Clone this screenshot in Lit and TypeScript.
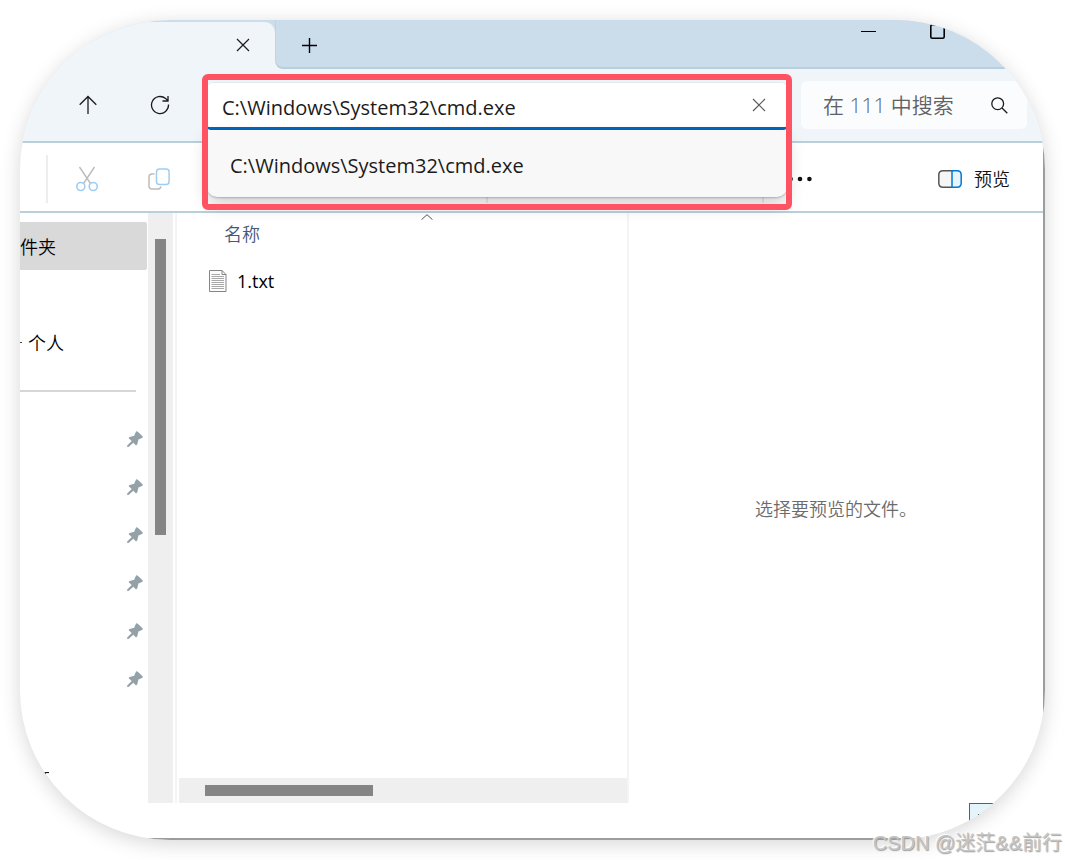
import { LitElement, html, css, svg } from "lit";
import { customElement, state } from "lit/decorators.js";

const PATH = "C:\\Windows\\System32\\cmd.exe";

const cross = svg`<path d="M1 1 L13 13 M13 1 L1 13" />`;

@customElement("app-root")
export class AppRoot extends LitElement {
  static styles = css`
    :host {
      display: block;
      position: relative;
      background: #fff;
      color: #1b1b1b;
      font-family: "Open Sans", "Noto Sans CJK SC", sans-serif;
      font-size: 18px;
      line-height: 24px;
    }
    * {
      box-sizing: border-box;
    }
    button {
      display: flex;
      align-items: center;
      justify-content: center;
      padding: 0;
      border: 0;
      background: none;
      color: inherit;
      font: inherit;
    }
    input {
      min-width: 0;
      flex: 1;
      padding: 0;
      border: 0;
      outline: 0;
      background: none;
      color: inherit;
      font: inherit;
    }
    svg {
      display: block;
      flex: none;
      fill: none;
      stroke: currentColor;
    }
    .page {
      display: flex;
      min-height: 100vh;
      padding: 20px;
    }
    .window {
      display: flex;
      flex: 1;
      flex-direction: column;
      min-width: 0;
      overflow: hidden;
      border-radius: 150px;
      background: #fff;
      box-shadow: 0 4px 20px rgba(0, 0, 0, 0.16);
    }

    .titlebar {
      display: flex;
      height: 49px;
      background: linear-gradient(#cbddeb 50%, #eff5f9 50%);
    }
    .tab {
      display: flex;
      justify-content: flex-end;
      width: 255px;
      margin-top: 2px;
      padding-right: 16px;
      border-radius: 0 10px 0 0;
      background: #eff5f9;
    }
    .tab button {
      width: 32px;
      height: 45px;
    }
    .strip {
      display: flex;
      flex: 1;
      justify-content: space-between;
      border-bottom: 2px solid #b9cfdf;
      border-left: 1px solid #bfd3e2;
      border-radius: 0 0 0 8px;
      background: #cbddeb;
      color: #000;
    }
    .strip > button {
      width: 67px;
      height: 50px;
    }
    .controls {
      display: flex;
      height: 22px;
      padding-right: 4px;
      color: #000;
    }
    .controls button {
      width: 69px;
    }

    .navbar {
      display: flex;
      align-items: center;
      height: 74px;
      padding: 0 18px 0 32px;
      border-bottom: 2px solid #b9cfda;
      background: #eff5f9;
      font-size: 20px;
    }
    .navbar > button {
      width: 72px;
      height: 48px;
    }
    .address {
      position: relative;
      display: flex;
      flex: 1;
      align-items: center;
      height: 48px;
      margin: 2px 0 0 11px;
      padding: 0 12px 0 15px;
      border-top: 1px solid #e6e9ec;
      border-bottom: 3px solid #0067c0;
      border-radius: 6px 6px 4px 4px;
      background: #fff;
    }
    .address input {
      padding-top: 5px;
    }
    .address .clear {
      width: 32px;
      height: 32px;
      color: #5c5c5c;
    }
    .suggestions {
      position: absolute;
      z-index: 1;
      top: 47px;
      left: 0;
      right: 0;
      margin: 0;
      padding: 12px 8px 9px;
      border-radius: 0 0 10px 10px;
      background: #f8f8f8;
      box-shadow: 0 1px 2px rgba(0, 0, 0, 0.22), 0 8px 18px rgba(0, 0, 0, 0.18);
    }
    .suggestions button {
      justify-content: flex-start;
      width: 100%;
      height: 46px;
      padding: 2px 0 0 15px;
    }
    .marker {
      position: absolute;
      z-index: 2;
      inset: -9px -5px -83px -5px;
      border: 6px solid #ff5263;
      border-radius: 6px;
      pointer-events: none;
    }
    .search {
      display: flex;
      align-items: center;
      width: 226px;
      height: 48px;
      margin-left: 14px;
      padding: 0 19px 0 22px;
      border-radius: 6px;
      background: #fbfcfe;
      font-size: 21px;
      font-weight: 350;
    }
    .search input::placeholder {
      color: #5f6163;
      opacity: 1;
    }

    .lower {
      display: flex;
      flex: 1;
      flex-direction: column;
      border: solid #9c9c9c;
      border-width: 0 2px 2px 0;
    }
    .commands {
      display: flex;
      align-items: center;
      height: 70px;
      padding: 4px 33px 0 26px;
      border-bottom: 2px solid #b9cfda;
    }
    .commands button {
      width: 72px;
      height: 48px;
    }
    .rule {
      width: 2px;
      height: 48px;
      background: #ededed;
    }
    .edit,
    .arrange {
      display: flex;
    }
    .edit {
      width: 438px;
      padding-left: 3px;
    }
    .arrange {
      width: 274px;
    }
    .commands .preview-toggle {
      width: auto;
      gap: 12px;
      margin-left: auto;
      color: #111;
      font-weight: 350;
    }

    .content {
      display: flex;
      flex: 1;
    }
    .tree {
      width: 128px;
      margin: 0;
      padding: 9px 1px 0 0;
      list-style: none;
      color: #000;
      font-weight: 350;
    }
    .tree li {
      display: flex;
      align-items: center;
      height: 48px;
      padding-top: 1px;
      white-space: pre;
    }
    .tree .current {
      border-radius: 0 2px 2px 0;
      background: #d9d9d9;
    }
    .tree .pinned {
      justify-content: flex-end;
      padding-right: 4px;
      color: #95a1a9;
    }
    .tree hr {
      width: 100%;
      height: 2px;
      margin: 0 11px 0 0;
      border: 0;
      background: #d6d6d6;
    }
    .tree .dash {
      width: 2px;
      height: 1px;
      margin-right: 6px;
      background: #444;
    }
    .vscroll {
      width: 25px;
      padding: 26px 7px 0;
      background: #efefef;
    }
    .vscroll .thumb {
      height: 296px;
    }
    .thumb {
      background: #858585;
    }
    .files {
      display: flex;
      flex: 0 1 454px;
      flex-direction: column;
      justify-content: space-between;
      min-width: 0;
      margin-left: 2px;
      padding-left: 2px;
      overflow: hidden;
      border: solid #f4f4f4;
      border-width: 0 2px;
    }
    table {
      width: 436px;
      margin-left: 30px;
      border-collapse: collapse;
      color: #000;
    }
    th,
    td {
      padding: 0;
      font-weight: 350;
      text-align: left;
    }
    td {
      font-weight: 400;
    }
    th button {
      flex-direction: column;
      align-items: stretch;
      width: 100%;
      height: 44px;
      justify-content: flex-start;
      padding: 1px 0 0;
      color: #44597a;
      text-align: left;
    }
    th svg {
      align-self: center;
      color: #555;
    }
    th span {
      padding: 2px 15px 0;
    }
    .file {
      display: flex;
      align-items: center;
      gap: 10px;
      height: 48px;
    }
    .hscroll {
      padding: 7px 26px;
      background: #efefef;
    }
    .hscroll .thumb {
      width: 168px;
      height: 11px;
    }
    .preview {
      display: flex;
      flex: 1;
      align-items: center;
      justify-content: center;
      padding-top: 2px;
      color: #6b6b6b;
      font-weight: 350;
    }
    .status {
      display: flex;
      justify-content: flex-end;
      height: 35px;
      padding-right: 38px;
    }
    .status button {
      align-items: flex-start;
      justify-content: flex-start;
      width: 36px;
      padding: 10px 8px;
      border: 1px solid #0078d7;
      background: #e5f3fb;
    }
    .credit {
      position: absolute;
      right: 3px;
      bottom: 5px;
      color: #c4c4c4;
      font-family: "Liberation Sans", "Noto Sans CJK SC", sans-serif;
      font-size: 20px;
      font-weight: 350;
      text-shadow: 1px 1px 1px #a0a0a0, -1px -1px 1px #fff;
    }
  `;

  @state() private address = PATH;

  private pin() {
    return html`<li class="pinned">
      <svg width="16" height="16" viewBox="0 0 16 16" stroke-width="0">
        <path fill="currentColor" d="M9 .5 Q9.8 0 10.8 .7 L15.5 5.2 Q16.200 6.200 15 7 L11.500 8.600 L10.200 13.600 L9 14.400 L6.300 11.700 L1.500 16 L0 15.800 L.2 14.500 L4.700 10 L1.500 7 L2.500 6 L7.200 4.800 Z" />
      </svg>
    </li>`;
  }

  render() {
    return html`
      <div class="page">
        <main class="window">
          <header class="titlebar">
            <div class="tab">
              <button aria-label="关闭标签页">
                <svg width="14" height="14" viewBox="0 0 14 14" stroke-width="1.2">${cross}</svg>
              </button>
            </div>
            <div class="strip">
              <button aria-label="新标签页">
                <svg width="15" height="15" viewBox="0 0 15 15" stroke-width="1.4"><path d="M7.500 0 V15 M0 7.500 H15" /></svg>
              </button>
              <div class="controls">
                <button aria-label="最小化">
                  <svg width="15" height="15" viewBox="0 0 15 15"><path d="M0 7.500 H15" /></svg>
                </button>
                <button aria-label="最大化">
                  <svg width="15" height="15" viewBox="0 0 15 15" stroke-width="1.6"><rect x=".8" y=".8" width="13.400" height="13.400" rx="1.500" /></svg>
                </button>
                <button aria-label="关闭">
                  <svg width="14" height="14" viewBox="0 0 14 14">${cross}</svg>
                </button>
              </div>
            </div>
          </header>

          <nav class="navbar">
            <button aria-label="向上">
              <svg width="18" height="20" viewBox="0 0 18 20" stroke-width="1.300"><path d="M9 19 V1.500 M.7 9.800 L9 1.500 L17.300 9.800" /></svg>
            </button>
            <button aria-label="刷新">
              <svg width="20" height="20" viewBox="0 0 20 20" stroke-width="1.300">
                <path d="M18.500 9.500 A8.500 8.500 0 1 1 15.600 3.600 L18 5.600 M18 1 V6 H12.500" />
              </svg>
            </button>
            <div class="address">
              <input aria-label="地址" .value=${this.address}
                @input=${(e: Event) => (this.address = (e.target as HTMLInputElement).value)} />
              <button class="clear" aria-label="清除" @click=${() => (this.address = "")}>
                <svg width="14" height="14" viewBox="0 0 14 14" stroke-width="1.200">${cross}</svg>
              </button>
              <div class="suggestions">
                <button @click=${() => (this.address = PATH)}>${PATH}</button>
              </div>
              <div class="marker"></div>
            </div>
            <label class="search">
              <input aria-label="搜索" placeholder="在 111 中搜索" />
              <svg width="17" height="17" viewBox="0 0 17 17" stroke-width="1.300"><circle cx="6.700" cy="6.700" r="5.900" /><path d="M11 11 L16.300 16.300" /></svg>
            </label>
          </nav>

          <div class="lower">
            <div class="commands">
              <div class="rule"></div>
              <div class="edit">
                <button aria-label="剪切">
                  <svg width="22" height="26" viewBox="0 0 22 26" stroke-width="1.400">
                    <path stroke="#bdbdbd" d="M3.500 1 L14.500 17.500 M18.500 1 L7.500 17.500" />
                    <g stroke="#9fcdf2" stroke-width="1.600"><circle cx="4.800" cy="20.500" r="4" /><circle cx="17.200" cy="20.500" r="4" /></g>
                  </svg>
                </button>
                <button aria-label="复制">
                  <svg width="22" height="22" viewBox="0 0 22 22" stroke-width="1.500">
                    <path stroke="#bdbdbd" d="M6.500 6 H4 Q1 6 1 9 V18 Q1 21 4 21 H9.500 Q12.500 21 13 18.500" />
                    <rect stroke="#9fcdf2" x="8.500" y="1" width="12.600" height="15.500" rx="3" />
                  </svg>
                </button>
              </div>
              <div class="rule"></div>
              <div class="arrange"></div>
              <div class="rule"></div>
              <button aria-label="更多">
                <svg width="24" height="6" viewBox="0 0 24 6" stroke-width="0">
                  <g fill="#111"><circle cx="2.600" cy="3" r="2.300" /><circle cx="12" cy="3" r="2.300" /><circle cx="21.400" cy="3" r="2.300" /></g>
                </svg>
              </button>
              <button class="preview-toggle">
                <svg width="24" height="18" viewBox="0 0 24 18" stroke-width="1.500">
                  <path stroke="#555" fill="#f6f6f6" d="M14 .8 H5 Q.8 .8 .8 5 V13 Q.8 17.200 5 17.200 H14" />
                  <path stroke="#0078d4" fill="#e9f5fd" d="M14 .8 H19 Q23.200 .8 23.200 5 V13 Q23.200 17.200 19 17.200 H14 Z" />
                </svg>
                <span>预览</span>
              </button>
            </div>

            <div class="content">
              <ul class="tree">
                <li class="current">件夹</li>
                <li></li>
                <li><span class="dash"></span>个人</li>
                <li><hr /></li>
                ${[0, 1, 2, 3, 4, 5].map(() => this.pin())}
                <li></li>
                <li>
                  <svg width="29" height="6" viewBox="0 0 29 6" stroke="#234"><path d="M23 .6 H29 M25.500 1 V3" /></svg>
                </li>
              </ul>
              <div class="vscroll"><div class="thumb"></div></div>
              <section class="files">
                <table>
                  <thead>
                    <tr>
                      <th>
                        <button>
                          <svg width="12" height="6" viewBox="0 0 12 6"><path d="M.5 5.700 L6 .7 L11.500 5.700" /></svg>
                          <span>名称</span>
                        </button>
                      </th>
                    </tr>
                  </thead>
                  <tbody>
                    <tr>
                      <td>
                        <div class="file">
                          <svg width="18" height="22" viewBox="0 0 18 22">
                            <path fill="#fcfcfc" stroke="#858585" d="M.5 .5 H13 L17 4.500 V21.500 H.5 Z M13 .5 V4.500 H17" />
                            <path stroke="#a8a8a8" d="M2.500 4.500 H11 M2.500 6.500 H15 M2.500 8.500 H15 M2.500 10.500 H15 M2.500 12.500 H15 M2.500 14.500 H15 M2.500 16.500 H15 M2.500 18.500 H15" />
                          </svg>
                          <span>1.txt</span>
                        </div>
                      </td>
                    </tr>
                  </tbody>
                </table>
                <div class="hscroll"><div class="thumb"></div></div>
              </section>
              <aside class="preview">选择要预览的文件。</aside>
            </div>
            <footer class="status">
              <button aria-label="详细信息">
                <svg width="16" height="2" viewBox="0 0 16 2" stroke="#333"><path d="M0 .5 H3 M5 .5 H16" /></svg>
              </button>
            </footer>
          </div>
        </main>
      </div>
      <div class="credit">CSDN @迷茫&amp;&amp;前行</div>
    `;
  }
}
